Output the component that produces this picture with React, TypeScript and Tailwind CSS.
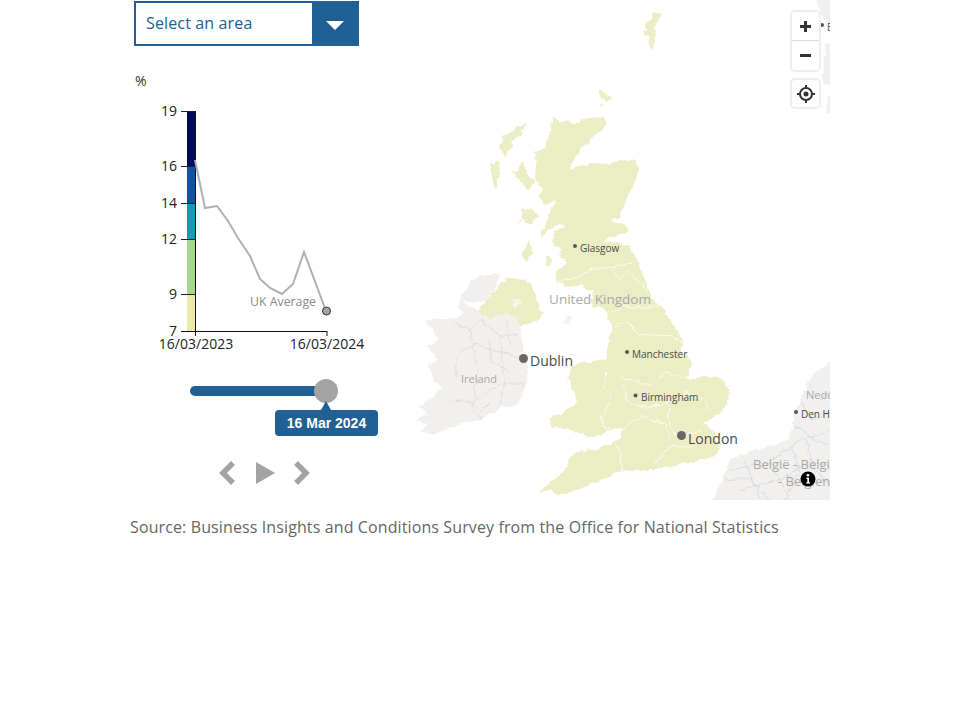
const land = '#ebedc4';
const grey = '#f1f0ef';

const ticks = [
  { label: '19', y: 111 },
  { label: '16', y: 166 },
  { label: '14', y: 203 },
  { label: '12', y: 239 },
  { label: '9', y: 294 },
  { label: '7', y: 331 },
];

const bands = [
  { y: 111, h: 55, fill: '#000c5a' },
  { y: 166, h: 37, fill: '#0a52a8' },
  { y: 203, h: 36, fill: '#0b9fb5' },
  { y: 239, h: 55, fill: '#a9d68e' },
  { y: 294, h: 37, fill: '#ede9ad' },
];

const britain =
  '553,117 562,121 575,123 590,118 605,115 606,125 597,133 583,147 573,160 570,170 590,163 605,164 620,160 637,161 638,175 630,192 624,206 618,218 610,221 625,225 628,230 612,238 600,241 618,243 630,246 638,262 646,282 652,298 662,307 672,322 683,340 681,352 692,363 690,372 688,380 700,377 712,376 723,380 729,390 728,402 723,410 710,420 702,423 712,430 719,447 713,457 700,461 687,463 668,466 650,470 635,470 620,472 606,478 593,483 575,491 557,495 549,490 538,493 549,484 563,472 567,463 572,455 577,452 598,449 620,439 622,428 607,431 593,438 577,432 551,426 550,418 565,412 577,403 574,392 567,378 572,368 580,362 595,361 607,358 607,350 610,338 612,327 608,318 607,310 600,306 592,307 592,298 593,291 580,285 570,287 557,283 556,276 557,270 567,263 561,256 560,250 552,244 553,232 566,228 560,222 548,230 540,238 546,222 552,208 556,200 546,205 538,197 543,190 535,180 536,165 535,153 545,148 548,138 551,126';

const nIreland =
  '487,300 495,288 507,278 520,279 530,283 536,295 538,307 544,312 538,320 527,325 520,327 515,318 507,313 498,316 490,320 483,314 477,310';

const ireland =
  '470,280 480,276 492,274 500,272 497,282 487,300 476,302 462,300 470,306 477,310 483,314 490,320 498,316 507,313 515,318 520,327 522,342 525,357 528,373 525,387 522,396 518,405 500,408 480,420 458,424 433,435 421,430 428,424 416,420 426,414 418,407 435,396 441,387 434,380 428,363 438,360 428,347 439,340 425,320 440,318 453,320 463,313 458,306 462,296';

const continent =
  '705,515 722,480 730,460 753,450 770,447 787,440 793,430 793,417 800,402 807,383 815,372 830,362 845,355 845,515';

const regionLines = [
  '553,283 575,278 595,268 612,268 632,262',
  '612,268 620,280 628,272 648,290',
  '612,312 622,306 642,308 665,304',
  '612,327 628,322 640,334 672,336 682,342',
  '607,372 604,385 612,396 606,410 600,418 604,428 622,430',
  '620,377 650,385 668,372 678,376 690,378',
  '622,385 628,403 650,408 658,404',
  '650,408 668,402 686,392 704,400 710,412',
  '668,402 670,428 678,440 700,430',
  '622,430 614,440 620,452 622,472',
  '622,430 642,416 666,424 670,446 650,470',
  '670,446 690,448 712,432',
];

const irelandLines = [
  '452,322 470,330 482,320 500,336 520,334',
  '458,352 476,344 500,352 522,358',
  '470,330 478,372 472,412 482,420',
  '500,336 504,380 500,404',
  '450,400 474,402 500,384 524,384',
  '456,356 456,376',
  '488,340 492,362 510,372',
  '506,320 510,346',
  '470,400 480,412 490,402',
];

const continentLines = [
  '730,470 770,462 800,440 830,432',
  '740,490 780,480 810,462 830,466',
  '800,402 812,420 830,412',
  '810,385 820,400 830,392',
  '770,462 790,500',
  '806,440 815,470 830,485',
  '745,460 760,498',
  '795,425 815,440 830,445',
  '790,445 800,470 785,500',
  '725,480 750,478 770,500',
];

const chartLine =
  '195,160 205,208 217,206 228,221 238,238 250,256 260,279 270,288 282,294 293,284 304,252 326,311';

function Chart() {
  return (
    <svg viewBox="130 100 270 260" className="h-[260px] w-[270px]" style={{ fontFamily: '"Open Sans", sans-serif' }}>
      {bands.map((b) => (
        <rect key={b.y} x={187} y={b.y} width={8} height={b.h} fill={b.fill} />
      ))}
      {ticks.map((t) => (
        <g key={t.label}>
          <line x1={181} x2={195} y1={t.y + 0.5} y2={t.y + 0.5} stroke="#222" />
          <text x={177} y={t.y + 5} textAnchor="end" fontSize={14} fill="#222">
            {t.label}
          </text>
        </g>
      ))}
      <line x1={195.5} x2={195.5} y1={111} y2={336} stroke="#111" />
      <line x1={181} x2={327} y1={331.5} y2={331.5} stroke="#111" />
      <line x1={327} x2={327} y1={331} y2={336} stroke="#111" />
      <polyline points={chartLine} fill="none" stroke="#b0b0b0" strokeWidth={2} />
      <circle cx={326.5} cy={311} r={4} fill="#a5a5a5" stroke="#333" />
      <text x={316} y={306} textAnchor="end" fontSize={12.3} fill="#8a8a8a">
        UK Average
      </text>
      <text x={196} y={349} textAnchor="middle" fontSize={14} fill="#222">
        16/03/2023
      </text>
      <text x={327} y={349} textAnchor="middle" fontSize={14} fill="#222">
        16/03/2024
      </text>
    </svg>
  );
}

function MapShapes() {
  return (
    <svg viewBox="400 0 430 500" className="h-[500px] w-[430px]" style={{ fontFamily: '"Open Sans", sans-serif' }}>
      <defs>
        <filter id="coast" filterUnits="userSpaceOnUse" x="390" y="-10" width="460" height="530">
          <feTurbulence type="fractalNoise" baseFrequency="0.14" numOctaves="3" seed="7" result="noise" />
          <feDisplacementMap in="SourceGraphic" in2="noise" scale="6" xChannelSelector="R" yChannelSelector="G" />
          <feGaussianBlur stdDeviation="0.45" />
        </filter>
      </defs>
      <g filter="url(#coast)">
        <polygon points={ireland} fill={grey} />
        <polygon points={continent} fill={grey} />
        <polygon points="815,-5 840,-5 840,32 822,18" fill={grey} />
        <polygon points="826,45 840,40 840,86 822,84" fill={grey} />
        <rect x={827} y={96} width={8} height={18} fill={grey} />
        {irelandLines.map((p) => (
          <polyline key={p} points={p} fill="none" stroke="#e4d8d6" strokeWidth={0.9} />
        ))}
        {continentLines.map((p) => (
          <polyline key={p} points={p} fill="none" stroke="#dddddd" strokeWidth={1.1} />
        ))}
        <polygon points={britain} fill={land} />
        <polygon points={nIreland} fill={land} />
        {/* islands */}
        <polygon points="525,122 521,135 512,142 509,150 506,156 500,148 503,137 512,131" fill={land} />
        <polygon points="494,164 500,162 499,176 497,188 494,186 491,172 490,164" fill={land} />
        <polygon points="522,161 526,172 535,182 528,190 520,180 512,172 518,170" fill={land} />
        <polygon points="522,208 534,210 540,216 530,224 523,218 518,226 522,214" fill={land} />
        <polygon points="526,245 530,240 533,252 526,262 522,256" fill={land} />
        <polygon points="546,254 551,256 551,266 547,266" fill={land} />
        <polygon points="599,90 604,92 612,98 606,102 600,98 598,94" fill={land} />
        <polygon points="600,104 604,106 601,107" fill={land} />
        <polygon points="663,2 660,12 654,14 650,20 642,32 648,36 650,48 653,50 656,36 654,28 658,22" fill={land} />
        <polygon points="567,316 572,318 567,326 563,324" fill="#f1f1ee" />
        <polygon points="512,300 518,297 522,302 517,307 513,307" fill="#f6f7e6" />
        {regionLines.map((p) => (
          <polyline key={p} points={p} fill="none" stroke="#ffffff" strokeWidth={1} strokeOpacity={0.8} />
        ))}
      </g>
      <text x={600} y={304} textAnchor="middle" fontSize={13.500} fill="#a9a9a9">
        United Kingdom
      </text>
      <text x={479} y={383} textAnchor="middle" fontSize={11} fill="#a9a9a9">
        Ireland
      </text>
      <circle cx={523.5} cy={358.5} r={4.5} fill="#6b6666" />
      <text x={530} y={366} fontSize={14} fill="#4a4a4a">
        Dublin
      </text>
      <circle cx={681.5} cy={435.5} r={4.5} fill="#6b6666" />
      <text x={688} y={444} fontSize={14} fill="#4a4a4a">
        London
      </text>
      <circle cx={575} cy={246} r={2} fill="#555" />
      <text x={580} y={252} fontSize={10} fill="#4a4a4a">
        Glasgow
      </text>
      <circle cx={627} cy={352} r={2} fill="#555" />
      <text x={632} y={358} fontSize={10} fill="#4a4a4a">
        Manchester
      </text>
      <circle cx={635.5} cy={395.5} r={2} fill="#555" />
      <text x={641} y={401} fontSize={10} fill="#4a4a4a">
        Birmingham
      </text>
      <circle cx={796} cy={412} r={2} fill="#555" />
      <text x={801} y={418} fontSize={10} fill="#4a4a4a">
        Den Haag
      </text>
      <circle cx={822} cy={25} r={2} fill="#555" />
      <text x={827} y={31} fontSize={10} fill="#4a4a4a">
        Bergen
      </text>
      <text x={806} y={399} fontSize={11} fill="#a9a9a9">
        Nederland
      </text>
      <text x={753} y={469} fontSize={13} fill="#a9a9a9">
        België - België
      </text>
      <text x={778} y={486} fontSize={13} fill="#a9a9a9">
        - Belgien
      </text>
    </svg>
  );
}

export default function App() {
  return (
    <div className="mx-auto w-[700px] font-['Open_Sans',sans-serif]">
      <div className="flex h-[500px] w-[700px] overflow-hidden">
        <div className="w-[270px] shrink-0">
          <div className="ml-1 mt-px flex h-[45px] w-[225px] border-2 border-[#206095] bg-white">
            <div className="flex-1 pl-[10px] text-base leading-[41px] tracking-[0.14px] text-[#206095]">Select an area</div>
            <div className="flex w-[45px] items-center justify-center bg-[#206095]">
              <div className="mt-1 h-0 w-0 border-x-[9px] border-t-[9px] border-x-transparent border-t-white" />
            </div>
          </div>
          <div className="ml-[5px] mt-[25px] h-[29px] text-sm leading-[19px] text-[#333]">%</div>
          <Chart />
          <div className="relative ml-[60px] mt-[26px] h-[10px] w-[136px] rounded-full bg-[#206095]">
            <div className="absolute right-[-12px] top-[-7px] h-6 w-6 rounded-full bg-[#a3a3a3]" />
            <div className="absolute left-[85px] top-[24px] h-[26px] w-[103px] rounded bg-[#206095] text-center font-['Liberation_Sans',sans-serif] text-sm font-bold leading-[26px] text-white">
              16 Mar 2024
              <div className="absolute left-[46px] top-[-9px] h-0 w-0 border-x-[5px] border-b-[9px] border-x-transparent border-b-[#206095]" />
            </div>
          </div>
          <div className="ml-[87px] mt-[65px] flex h-[24px] items-center">
            <svg width="18" height="24" viewBox="0 0 18 24">
              <path d="M16 2 6 12l10 10" fill="none" stroke="#a3a3a3" strokeWidth="5.500" strokeLinejoin="miter" />
            </svg>
            <svg width="20" height="24" viewBox="0 0 20 24" className="ml-[21px]">
              <path d="M0 1v22l19-11z" fill="#a3a3a3" />
            </svg>
            <svg width="18" height="24" viewBox="0 0 18 24" className="ml-[18px]">
              <path d="M2 2l10 10L2 22" fill="none" stroke="#a3a3a3" strokeWidth="5.500" strokeLinejoin="miter" />
            </svg>
          </div>
        </div>

        <div className="relative h-[500px] w-[430px] shrink-0 overflow-hidden">
          <MapShapes />
          <div className="absolute left-[390px] top-[10px] w-[31px] overflow-hidden rounded-[5px] border-2 border-[#eeeeee] bg-white">
            <div className="flex h-[29px] items-center justify-center border-b border-[#ddd]">
              <svg width="13" height="13" viewBox="0 0 13 13">
                <path d="M6.500 1v11M1 6.500h11" stroke="#333" strokeWidth="3" />
              </svg>
            </div>
            <div className="flex h-[29px] items-center justify-center">
              <svg width="13" height="13" viewBox="0 0 13 13">
                <path d="M1 6.500h11" stroke="#333" strokeWidth="3" />
              </svg>
            </div>
          </div>
          <div className="absolute left-[390px] top-[78px] flex h-[31px] w-[31px] items-center justify-center rounded-[5px] border-2 border-[#eeeeee] bg-white">
            <svg width="18" height="18" viewBox="0 0 18 18">
              <circle cx="9" cy="9" r="6" fill="none" stroke="#333" strokeWidth="2" />
              <circle cx="9" cy="9" r="2.500" fill="#333" />
              <path d="M9 0v3M9 15v3M0 9h3M15 9h3" stroke="#333" strokeWidth="2" />
            </svg>
          </div>
          <div className="absolute left-[400px] top-[471px] h-4 w-4">
            <svg width="16" height="16" viewBox="0 0 16 16">
              <circle cx="8" cy="8" r="7.500" fill="#000" />
              <circle cx="8" cy="4.300" r="1.400" fill="#fff" />
              <path d="M6.300 6.800h2.700v4.400h1v1.300H6.300v-1.300h1V8.100h-1z" fill="#fff" />
            </svg>
          </div>
        </div>
      </div>
      <p className="mt-[16px] text-base leading-[22px] tracking-[0.115px] text-[#666]">
        Source: Business Insights and Conditions Survey from the Office for National Statistics
      </p>
    </div>
  );
}
